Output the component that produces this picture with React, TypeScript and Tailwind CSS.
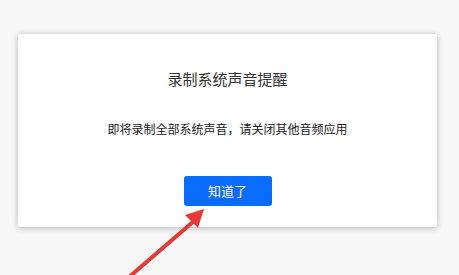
export default function App() {
  return (
    <div
      className="relative w-[459px] h-[275px] overflow-hidden bg-[#f7f7f7] pt-[34px] pl-[18px]"
      style={{ fontFamily: '"Noto Sans CJK SC", "Noto Sans", sans-serif' }}
    >
      <div className="w-[419px] h-[193px] bg-white rounded-[2px] shadow-[0_1px_6px_rgba(0,0,0,0.28)] flex flex-col items-center pt-[34px]">
        <h2 className="text-[15px] leading-[22px] text-[#333]">录制系统声音提醒</h2>
        <p className="mt-[30px] text-[12px] leading-[18px] text-[#222]">即将录制全部系统声音，请关闭其他音频应用</p>
        <button className="mt-[38px] w-[88px] h-[30px] rounded-[3px] bg-[#0a6cff] text-white text-[13px]">
          知道了
        </button>
      </div>
      <svg className="absolute left-0 top-0" width="459" height="275" viewBox="0 0 459 275">
        <line x1="128" y1="278" x2="194" y2="221" stroke="#e53935" strokeWidth="4" strokeLinecap="round" />
        <polygon points="204,209 185,215 198,228" fill="#e53935" />
      </svg>
    </div>
  );
}
